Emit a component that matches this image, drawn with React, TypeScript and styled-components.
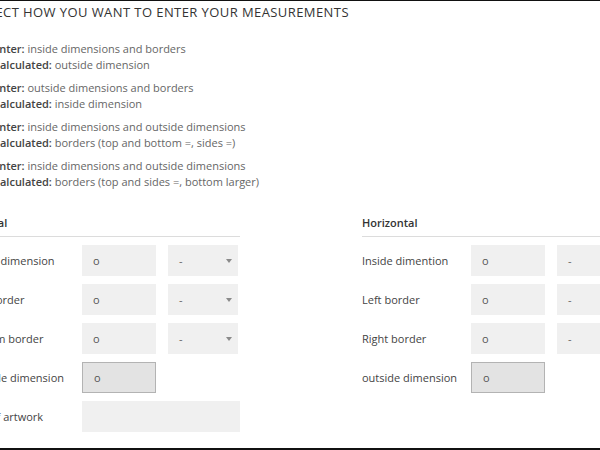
import React from "react";
import styled, { createGlobalStyle } from "styled-components";

const Global = createGlobalStyle`
  html, body { margin: 0; padding: 0; background: #fff; }
  body { font-family: "Open Sans", "Liberation Sans", sans-serif; overflow: hidden; }
`;

const Frame = styled.div`
  width: 600px;
  height: 450px;
  box-sizing: border-box;
  border-top: 1px solid #111;
  border-bottom: 2px solid #111;
  overflow: hidden;
`;

const Content = styled.div`
  margin-left: -27px;
  width: 680px;
`;

const Title = styled.h2`
  margin: 3px 0 0 0;
  font-family: "Open Sans", sans-serif;
  font-weight: 400;
  font-size: 13px;
  line-height: 16px;
  letter-spacing: 0.42px;
  color: #333;
  text-transform: uppercase;
`;

const Options = styled.div`
  margin: 21px 0 0 20px;
  display: flex;
  flex-direction: column;
  gap: 7px;
`;

const Option = styled.div`
  font-size: 11px;
  line-height: 16px;
  color: #666;
`;

const Line = styled.div``;

const Key = styled.span`
  font-weight: 600;
  color: #444;
`;

const Columns = styled.div`
  margin: 25px 0 0 -6px;
  display: grid;
  grid-template-columns: 273px 267px;
  column-gap: 122px;
`;

const Column = styled.div`
  display: flex;
  flex-direction: column;
`;

const Header = styled.div`
  font-size: 11px;
  font-weight: 600;
  line-height: 16px;
  color: #333;
  padding-bottom: 5px;
  border-bottom: 1px solid #dcdcdc;
  margin-bottom: 8px;
`;

const Rows = styled.div`
  display: flex;
  flex-direction: column;
  gap: 8px;
`;

const Row = styled.div<{ $labelWidth: number }>`
  display: grid;
  grid-template-columns: ${(p) => p.$labelWidth}px 74px 70px;
  column-gap: 12px;
  align-items: center;
  height: 31px;
`;

const Label = styled.div`
  font-size: 11px;
  color: #444;
  white-space: nowrap;
`;

const Field = styled.div<{ $readonly?: boolean; $wide?: boolean }>`
  box-sizing: border-box;
  height: 31px;
  display: flex;
  align-items: center;
  padding-left: 11px;
  font-size: 11px;
  color: #555;
  background: ${(p) => (p.$readonly ? "#e3e3e3" : "#f0f0f0")};
  border: ${(p) => (p.$readonly ? "1px solid #b3b3b3" : "none")};
  ${(p) => (p.$wide ? "grid-column: 2 / span 2; width: 158px;" : "")}
`;

const Select = styled.div`
  box-sizing: border-box;
  height: 31px;
  display: flex;
  align-items: center;
  justify-content: space-between;
  padding: 0 6px 0 11px;
  font-size: 11px;
  color: #666;
  background: #f0f0f0;
`;

const Caret = styled.span`
  width: 0;
  height: 0;
  border-left: 3.5px solid transparent;
  border-right: 3.5px solid transparent;
  border-top: 4px solid #8a8a8a;
`;

type RowDef = { label: string; select?: boolean; readonly?: boolean; wide?: boolean; value?: string };

const vertical: RowDef[] = [
  { label: "Inside dimension", select: true },
  { label: "Top border", select: true },
  { label: "Bottom border", select: true },
  { label: "Outside dimension", readonly: true },
  { label: "Size of artwork", wide: true, value: "" },
];

const horizontal: RowDef[] = [
  { label: "Inside dimention", select: true },
  { label: "Left border", select: true },
  { label: "Right border", select: true },
  { label: "outside dimension", readonly: true },
];

const options = [
  ["inside dimensions and borders", "outside dimension"],
  ["outside dimensions and borders", "inside dimension"],
  ["inside dimensions and outside dimensions", "borders (top and bottom =, sides =)"],
  ["inside dimensions and outside dimensions", "borders (top and sides =, bottom larger)"],
];

function FieldRow({ r, labelWidth }: { r: RowDef; labelWidth: number }) {
  return (
    <Row $labelWidth={labelWidth}>
      <Label>{r.label}</Label>
      <Field $readonly={r.readonly} $wide={r.wide}>
        {r.value ?? "o"}
      </Field>
      {r.select && (
        <Select>
          <span>-</span>
          <Caret />
        </Select>
      )}
    </Row>
  );
}

export default function App() {
  return (
    <>
      <Global />
      <Frame>
        <Content>
          <Title>Select how you want to enter your measurements</Title>
          <Options>
            {options.map(([e, c], i) => (
              <Option key={i}>
                <Line>
                  <Key>Enter:</Key> {e}
                </Line>
                <Line>
                  <Key>Calculated:</Key> {c}
                </Line>
              </Option>
            ))}
          </Options>
          <Columns>
            <Column>
              <Header>Vertical</Header>
              <Rows>
                {vertical.map((r) => (
                  <FieldRow key={r.label} r={r} labelWidth={103} />
                ))}
              </Rows>
            </Column>
            <Column>
              <Header>Horizontal</Header>
              <Rows>
                {horizontal.map((r) => (
                  <FieldRow key={r.label} r={r} labelWidth={97} />
                ))}
              </Rows>
            </Column>
          </Columns>
        </Content>
      </Frame>
    </>
  );
}
